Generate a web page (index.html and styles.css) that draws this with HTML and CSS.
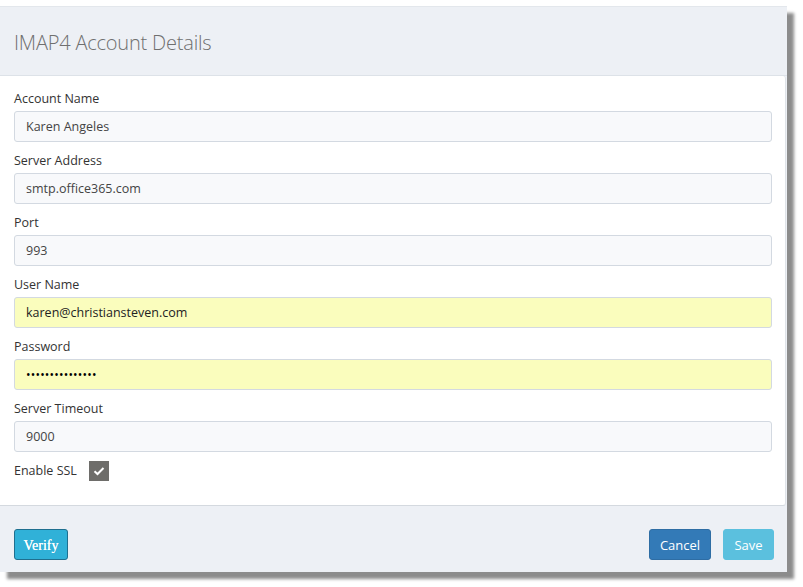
FILE: index.html
```html
<!DOCTYPE html>
<html>
<head>
<meta charset="utf-8">
<link rel="stylesheet" href="styles.css">
</head>
<body>
<div class="dialog">
  <div class="header"><h1 class="title">IMAP4 Account Details</h1></div>
  <div class="body">
    <div class="group">
      <label class="label">Account Name</label>
      <div class="input">Karen Angeles</div>
    </div>
    <div class="group">
      <label class="label">Server Address</label>
      <div class="input">smtp.office365.com</div>
    </div>
    <div class="group">
      <label class="label">Port</label>
      <div class="input">993</div>
    </div>
    <div class="group">
      <label class="label">User Name</label>
      <div class="input filled">karen@christiansteven.com</div>
    </div>
    <div class="group">
      <label class="label">Password</label>
      <div class="input filled pw">•••••••••••••••</div>
    </div>
    <div class="group">
      <label class="label">Server Timeout</label>
      <div class="input">9000</div>
    </div>
    <div class="check-row">
      <span class="label">Enable SSL</span>
      <span class="checkbox"><svg width="12" height="10" viewBox="0 0 12 10"><path d="M1.5 5.2 L4.5 8 L10.5 2" fill="none" stroke="#fff" stroke-width="2"/></svg></span>
    </div>
  </div>
  <div class="footer">
    <button class="btn btn-verify">Verify</button>
    <div class="right">
      <button class="btn btn-cancel">Cancel</button>
      <button class="btn btn-save">Save</button>
    </div>
  </div>
</div>
</body>
</html>
```
FILE: styles.css
```css
html, body {
  margin: 0;
  padding: 0;
  background: #ffffff;
}
body {
  font-family: "Open Sans", "Noto Sans", sans-serif;
  padding-top: 6px;
  min-height: 587px;
  box-sizing: border-box;
}
.dialog {
  width: 787px;
  background: #edf0f5;
  box-shadow: 7px 7px 3px rgba(0, 0, 0, 0.45);
  border-top: 1px solid #e3e7ec;
  box-sizing: border-box;
}
.header {
  height: 68px;
  display: flex;
  align-items: center;
  padding-left: 14px;
  border-bottom: 1px solid #dde2e8;
}
.title {
  margin: 0;
  font-weight: 300;
  font-size: 20px;
  color: #6f6f6f;
  letter-spacing: -0.2px;
  padding-top: 2px;
}
.body {
  background: #ffffff;
  width: 786px;
  box-sizing: border-box;
  border-right: 1px solid #dfe3e8;
  border-bottom: 1px solid #d4d9df;
  border-radius: 0 3px 3px 0;
  padding: 14px 14px 24px 14px;
}
.group {
  display: flex;
  flex-direction: column;
  margin-bottom: 10px;
}
.label {
  font-size: 12.5px;
  line-height: 18px;
  color: #333;
  margin-bottom: 3px;
}
.input {
  width: 758px;
  height: 31px;
  box-sizing: border-box;
  border: 1px solid #d3d9e1;
  border-radius: 3px;
  background: #f8f9fb;
  padding: 0 11px;
  display: flex;
  align-items: center;
  font-size: 12.5px;
  color: #444;
}
.input.filled {
  background: #fafdbd;
  color: #222;
}
.input.pw {
  font-size: 12px;
  letter-spacing: 0.2px;
  color: #000;
}
.check-row {
  display: flex;
  align-items: center;
  height: 20px;
  margin-top: -1px;
}
.check-row .label {
  margin: 0 12px 0 0;
}
.checkbox {
  width: 20px;
  height: 20px;
  background: #6e6d6a;
  display: flex;
  align-items: center;
  justify-content: center;
}
.footer {
  height: 66px;
  box-sizing: border-box;
  padding: 23px 13px 0 14px;
  display: flex;
  justify-content: space-between;
  align-items: flex-start;
}
.right {
  display: flex;
  gap: 12px;
}
.btn {
  height: 31px;
  border-radius: 3px;
  border: 1px solid transparent;
  color: #fff;
  font-size: 13px;
  font-family: "Open Sans", "Noto Sans", sans-serif;
  padding: 0;
  cursor: pointer;
}
.btn-verify {
  width: 54px;
  background: #30b1d8;
  border-color: #1f6f8f;
  font-family: "Liberation Serif", serif;
  font-size: 14px;
  padding-top: 2px;
  text-shadow: 0 0 0.4px #fff;
}
.btn-cancel {
  width: 62px;
  background: #337ab7;
  border-color: #2e6da4;
}
.btn-save {
  width: 51px;
  background: #5bc0de;
  border-color: #5bc0de;
}
```
